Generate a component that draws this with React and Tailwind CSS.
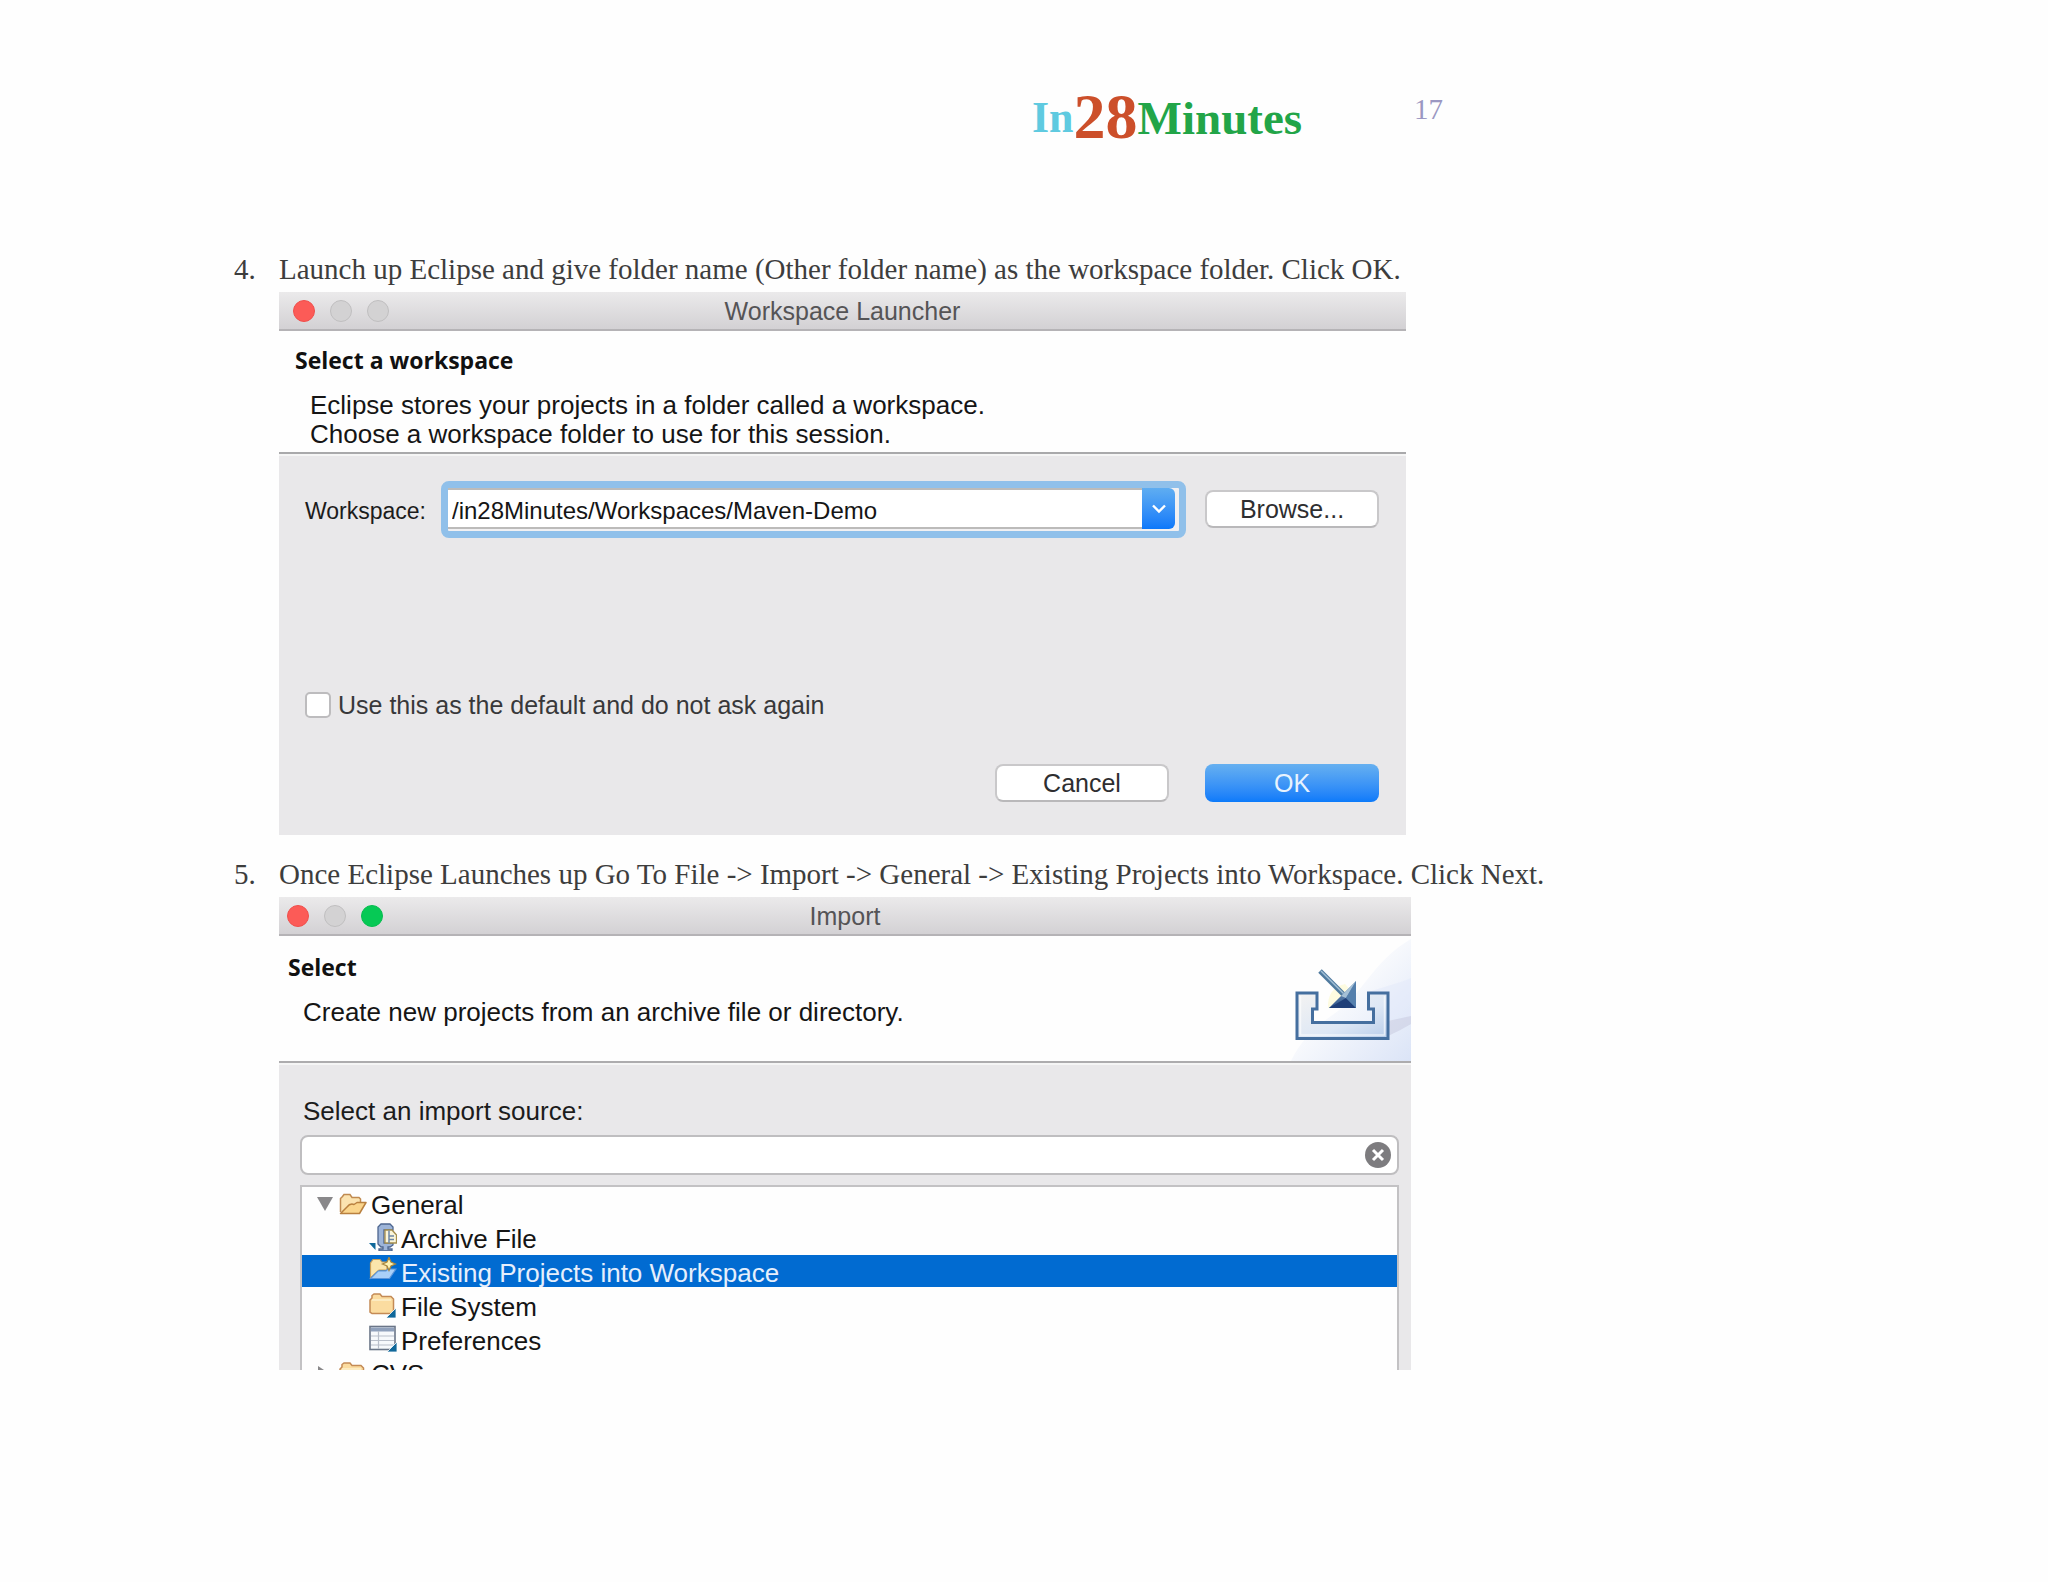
import { useState } from 'react';

const lightColors = {
  red: 'bg-[#fc5b57] border-[#f04f4c]',
  gray: 'bg-[#d3d2d3] border-[#c0bfc0]',
  green: 'bg-[#06c955] border-[#06bd4f]',
};

function TitleBar({ title, lights, className }) {
  return (
    <div
      className={`grid grid-cols-[1fr_auto_1fr] items-center h-[39px] border-b-2 border-[#b5b3b6] bg-linear-to-b from-[#ebeaeb] to-[#d3d1d4] ${className}`}
    >
      <div className="flex gap-[15px]">
        {lights.map((color, i) => (
          <span key={i} className={`size-[22px] rounded-full border ${lightColors[color]}`}></span>
        ))}
      </div>
      <h2 className="text-[25px] leading-8 text-[#555456]">{title}</h2>
    </div>
  );
}

function Step({ number, text, children }) {
  return (
    <li className="flex">
      <span className="w-[45px] shrink-0 pt-px font-['Liberation_Serif',serif] text-[29px] leading-9 text-[#3d3d3d]">
        {number}.
      </span>
      <div className="flex-1 min-w-0">
        <p className="pt-px pb-[5px] font-['Liberation_Serif',serif] text-[29px] leading-9 text-[#3d3d3d]">{text}</p>
        {children}
      </div>
    </li>
  );
}

function PushButton({ children }) {
  return (
    <button className="w-[174px] h-[38px] shrink-0 rounded-lg border-2 border-[#c9c8ca] border-b-[#b9b8ba] bg-white text-[25px] leading-8 text-[#2e2e30]">
      {children}
    </button>
  );
}

function WorkspaceLauncher() {
  const [workspace, setWorkspace] = useState('/in28Minutes/Workspaces/Maven-Demo');

  return (
    <section className="w-full max-w-[1127px] bg-[#e9e8ea] font-['Liberation_Sans',sans-serif]">
      <TitleBar title="Workspace Launcher" lights={['red', 'gray', 'gray']} className="pl-[14px] pr-[14px]" />

      <div className="bg-[#fefefe] pt-[15px] pb-[3px] pl-4 border-b-2 border-[#a9a9ab]">
        <h3 className="font-['Open_Sans',sans-serif] font-bold text-[23px] leading-7 text-[#111]">
          Select a workspace
        </h3>
        <p className="mt-[17px] pl-[15px] text-[26px] leading-[29px] text-[#151515]">
          Eclipse stores your projects in a folder called a workspace.
          <br />
          Choose a workspace folder to use for this session.
        </p>
      </div>

      <div className="border-t-2 border-[#f5f5f5] pt-[25px] pb-[33px] pl-[26px] pr-[27px]">
        <div className="flex items-center">
          <label htmlFor="workspace" className="w-[136px] shrink-0 pt-[3px] text-[23px] leading-8 text-[#1c1c1c]">
            Workspace:
          </label>
          <div className="flex flex-1 h-[57px] rounded-lg border-[7px] border-[#90c0ea] bg-[#f1f0f2] pb-0.5 pr-1">
            <input
              id="workspace"
              type="text"
              value={workspace}
              onChange={(e) => setWorkspace(e.target.value)}
              className="flex-1 min-w-0 bg-white border-y-2 border-[#bcbbba] pl-1 pt-1 text-2xl text-[#151515] outline-none"
            />
            <button
              aria-label="Show recent workspaces"
              className="flex items-center justify-center w-[33px] rounded-r-md bg-linear-to-b from-[#5fadf1] to-[#0a78fa]"
            >
              <svg width="16" height="10" viewBox="0 0 16 10" fill="none" stroke="#fff" strokeWidth="2.4">
                <path d="M2 1.5 L8 7.5 L14 1.5" />
              </svg>
            </button>
          </div>
          <div className="flex ml-[19px] pb-0.5">
            <PushButton>Browse...</PushButton>
          </div>
        </div>

        <div className="mt-[151px] flex items-center gap-[7px]">
          <input
            id="default"
            type="checkbox"
            className="appearance-none size-[26px] rounded-[5px] border-2 border-[#bdbcbe] bg-white"
          />
          <label htmlFor="default" className="text-[25px] leading-8 text-[#38383a]">
            Use this as the default and do not ask again
          </label>
        </div>

        <div className="mt-[43px] flex justify-end gap-9">
          <PushButton>Cancel</PushButton>
          <button className="w-[174px] h-[38px] rounded-lg bg-linear-to-b from-[#66b0f0] to-[#0a7afa] text-[25px] leading-8 text-[#e8f3fe]">
            OK
          </button>
        </div>
      </div>
    </section>
  );
}

function ImportBanner() {
  return (
    <svg width="140" height="125" viewBox="0 0 140 125" className="shrink-0">
      <defs>
        <linearGradient id="swoosh" x1="0" y1="0" x2="1" y2="1">
          <stop offset="0.35" stopColor="#fefefe" />
          <stop offset="1" stopColor="#dbe4f7" />
        </linearGradient>
        <linearGradient id="tray" x1="0" y1="0" x2="1" y2="1">
          <stop offset="0" stopColor="#f4f3f2" />
          <stop offset="0.6" stopColor="#dde7f5" />
          <stop offset="1" stopColor="#b9cdea" />
        </linearGradient>
        <linearGradient id="head" x1="0" y1="0" x2="0" y2="1">
          <stop offset="0" stopColor="#86a9ca" />
          <stop offset="1" stopColor="#2f5489" />
        </linearGradient>
      </defs>
      <path d="M140 3 C100 26 92 60 60 80 C40 94 28 108 20 125 H140 Z" fill="url(#swoosh)" />
      <path d="M140 42 C126 48 108 52 98 56 H117 V84 H140 Z" fill="#dfe7f9" opacity="0.4" />
      <path d="M117 85 L140 80 V88 Q130 94 117 100 Z" fill="#c5c8dd" opacity="0.5" />
      <path
        d="M26 57 H46 V73 H41.500 V86.500 H102.500 V73 H97.500 V57 H117 V102.500 H26 Z"
        fill="url(#tray)"
        stroke="#456f9f"
        strokeWidth="3"
      />
      <path d="M29.500 60 V99 H113.500 V60" fill="none" stroke="#fff" strokeWidth="1.500" opacity="0.6" />
      <path d="M57 72 Q56 52 74 48 L85 60 L80 72 Z" fill="#fdfbe0" />
      <path d="M49 35 L74 60" stroke="#4f7a9e" strokeWidth="5" />
      <path d="M50 35 L74 59" stroke="#a3bfd6" strokeWidth="1.500" />
      <path d="M85 45 L85 72 L58 72 Z" fill="url(#head)" />
      <path d="M85 72 L58 72 L75 62 Z" fill="#1f3f78" />
      <path d="M85 45 L75 62 L70 60 Z" fill="#a5c0d6" />
      <path d="M85 45 L85 72 L75 62 Z" fill="#5580ad" />
    </svg>
  );
}

function OpenFolderIcon() {
  return (
    <svg width="28" height="28" viewBox="0 0 28 28">
      <path
        d="M1.500 22 V8.500 L3.500 6.500 L5 4.500 H11 L13 7.500 H20 L21.500 9 V13"
        fill="#fbe3b0"
        stroke="#c08a50"
        strokeWidth="1.500"
      />
      <path
        d="M1.500 23.500 L8 17 Q11 13 15 14.500 L18 12.500 H27 L20.500 23.500 Z"
        fill="#fad58c"
        stroke="#b9803f"
        strokeWidth="1.500"
        strokeLinejoin="round"
      />
    </svg>
  );
}

function ArchiveIcon() {
  return (
    <svg width="28" height="28" viewBox="0 0 28 28">
      <path d="M0 20 H6.500 V27 Z" fill="#10689a" />
      <path
        d="M12 1 H21 L24 4 V7 H15 V20 H24 V22 L21 24 H19 V26 H23 V28 H10 V26 H14 V24 H12 L9 21 V4 Z"
        fill="#9db4d8"
        stroke="#4d658f"
        strokeWidth="1.300"
      />
      <path d="M16 7 H23 L27.500 12 V20 H16 Z" fill="#fbf6da" stroke="#a48d4d" strokeWidth="1.300" />
      <path d="M20 7.500 V20 M20 13 H25 M20 16.500 H25" stroke="#6e87a5" strokeWidth="1.500" />
    </svg>
  );
}

function ExistingProjectsIcon() {
  return (
    <svg width="28" height="28" viewBox="0 0 28 28">
      <path
        d="M1.500 21 V6 L4 2.500 H11 L13 5 H18 V13 H10 Z"
        fill="#fbe6ac"
        stroke="#c9a05a"
        strokeWidth="1.200"
      />
      <path d="M1.500 21.500 L9 14 L17 14 L19 12 H27 L20.500 21.500 Z" fill="#a9d0f8" stroke="#5b95da" strokeWidth="1.200" />
      <path d="M20 0.500 L22 5 L26.500 7 L22 9 L20 13.500 L18 9 L13.500 7 L18 5 Z" fill="#fdf3b4" stroke="#a8873f" strokeWidth="1.300" />
    </svg>
  );
}

function FolderIcon() {
  return (
    <svg width="28" height="28" viewBox="0 0 28 28">
      <path
        d="M1 21 V9 L3 7 V4.500 L5 3 H11 L13 5.500 H22 L24.500 8 V20 L22 22.500 H3 Z"
        fill="#fbdca0"
        stroke="#c48a55"
        strokeWidth="1.500"
      />
      <path d="M3 9 H22" stroke="#fdf0cd" strokeWidth="1.500" />
      <path d="M17 27 L27 17 V27 Z" fill="#10689a" stroke="#fff" strokeWidth="0.800" />
    </svg>
  );
}

function PreferencesIcon() {
  return (
    <svg width="28" height="28" viewBox="0 0 28 28">
      <rect x="1" y="1.500" width="25" height="23" fill="#f7f9fc" stroke="#6a7587" strokeWidth="1.600" />
      <rect x="2" y="2.500" width="23" height="4" fill="#8fa0bb" />
      <path d="M9.500 6 V24 M2 11 H25 M2 15.500 H25 M2 20 H25" stroke="#b9bfca" strokeWidth="1.200" />
      <path d="M18 27 L28 17 V27 Z" fill="#10689a" stroke="#fff" strokeWidth="0.800" />
    </svg>
  );
}

const generalItems = [
  { name: 'Archive File', Icon: ArchiveIcon },
  { name: 'Existing Projects into Workspace', Icon: ExistingProjectsIcon },
  { name: 'File System', Icon: FolderIcon },
  { name: 'Preferences', Icon: PreferencesIcon },
];

function ImportTree() {
  const [selected, setSelected] = useState('Existing Projects into Workspace');

  return (
    <ul role="tree" className="h-[185px] overflow-hidden border-2 border-b-0 border-[#c3c2c4] bg-[#fefefe] text-[26px] leading-8 text-[#151515]">
      <li role="treeitem" aria-expanded="true">
        <div className="flex items-center h-[34px] pl-[15px]">
          <svg width="16" height="14" viewBox="0 0 16 14" className="mr-1.5">
            <path d="M0 0 H16 L8 14 Z" fill="#89888a" />
          </svg>
          <OpenFolderIcon />
          <span className="ml-1 pt-0.5">General</span>
        </div>
        <ul role="group">
          {generalItems.map(({ name, Icon }) => (
            <li
              key={name}
              role="treeitem"
              aria-selected={selected === name}
              onClick={() => setSelected(name)}
              className={`flex items-center gap-1 h-8 mb-0.5 pl-[67px] ${
                selected === name ? 'bg-[#016bd1] text-[#e6effc]' : ''
              }`}
            >
              <Icon />
              <span className="pt-[3px]">{name}</span>
            </li>
          ))}
        </ul>
      </li>
      <li role="treeitem" aria-expanded="false" className="flex items-center h-[34px] pl-4">
        <svg width="15" height="16" viewBox="0 0 15 16" className="mr-1.5">
          <path d="M0 0 L12 8 L0 16 Z" fill="#89888a" />
        </svg>
        <FolderIcon />
        <span className="ml-1">CVS</span>
      </li>
    </ul>
  );
}

function ImportDialog() {
  const [filter, setFilter] = useState('');

  return (
    <section className="w-full max-w-[1132px] bg-[#e9e8ea] font-['Liberation_Sans',sans-serif]">
      <TitleBar title="Import" lights={['red', 'gray', 'green']} className="pl-2 pr-2" />

      <div className="flex justify-between bg-[#fefefe] border-b-2 border-[#adacae]">
        <div className="pt-[17px] pl-[9px]">
          <h3 className="font-['Open_Sans',sans-serif] font-bold text-[23px] leading-7 text-[#111]">Select</h3>
          <p className="mt-[17px] pl-[15px] text-[26px] leading-[29px] text-[#151515]">
            Create new projects from an archive file or directory.
          </p>
        </div>
        <ImportBanner />
      </div>

      <div className="border-t-2 border-[#f5f5f5] pt-[30px] pl-[21px] pr-3">
        <label htmlFor="source" className="block pl-[3px] mb-2 text-[26px] leading-8 text-[#1c1c1c]">
          Select an import source:
        </label>
        <div className="flex items-center h-10 mb-[10px] pr-1.5 rounded-lg border-2 border-[#bfbec0] bg-white">
          <input
            id="source"
            type="text"
            value={filter}
            onChange={(e) => setFilter(e.target.value)}
            className="flex-1 min-w-0 h-full pl-2 bg-transparent text-[26px] outline-none"
          />
          <button aria-label="Clear" onClick={() => setFilter('')}>
            <svg width="26" height="26" viewBox="0 0 26 26">
              <circle cx="13" cy="13" r="13" fill="#7d7c7f" />
              <path d="M8 8 L18 18 M18 8 L8 18" stroke="#fff" strokeWidth="3" />
            </svg>
          </button>
        </div>
        <ImportTree />
      </div>
    </section>
  );
}

function App() {
  return (
    <div className="min-h-screen bg-[#fefefe]">
      <header className="flex items-start pl-[50%] pt-[84px] font-['Liberation_Serif',serif]">
        <div className="flex items-start ml-2 font-bold">
          <span className="text-[44px] leading-[68px] text-[#5fcae0]">In</span>
          <span className="text-[64px] leading-[66px] text-[#cc4f2a]">28</span>
          <span className="text-[47px] leading-[68px] text-[#22a548]">Minutes</span>
        </div>
        <span className="ml-28 pt-[7px] text-[29px] leading-9 text-[#9b97c2]">17</span>
      </header>

      <main className="pt-[98px] pl-[234px] pr-16 pb-[210px]">
        <ol className="flex flex-col gap-5">
          <Step number={4} text="Launch up Eclipse and give folder name (Other folder name) as the workspace folder. Click OK.">
            <WorkspaceLauncher />
          </Step>
          <Step number={5} text="Once Eclipse Launches up Go To File -> Import -> General -> Existing Projects into Workspace. Click Next.">
            <ImportDialog />
          </Step>
        </ol>
      </main>
    </div>
  );
}

export default App;
